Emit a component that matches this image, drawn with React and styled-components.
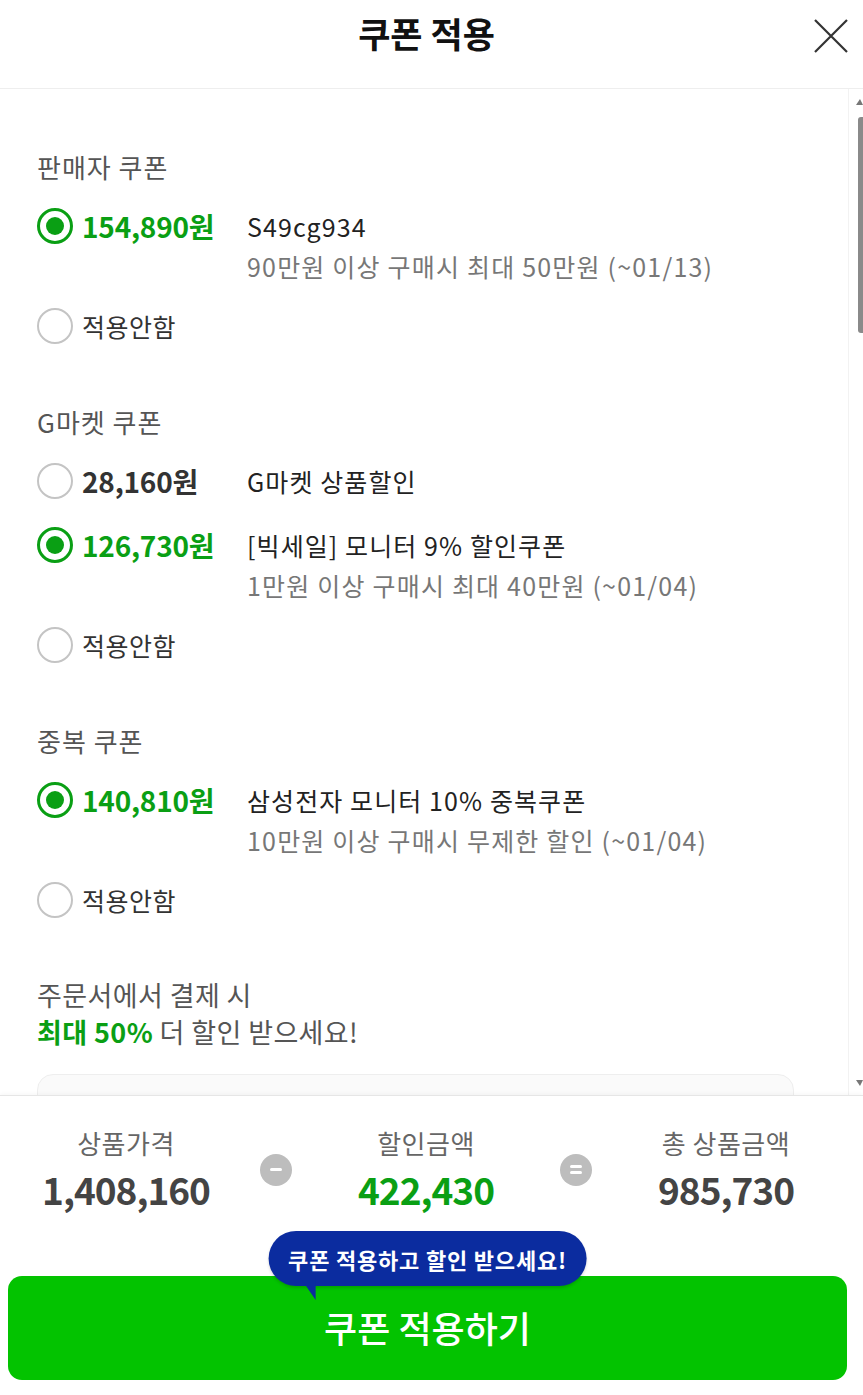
import React from "react";
import styled, { createGlobalStyle } from "styled-components";

const GlobalStyle = createGlobalStyle`
  html, body, #root {
    margin: 0;
    padding: 0;
    height: 100%;
  }
  body {
    font-family: "Noto Sans CJK KR", "Noto Sans", sans-serif;
    background: #fff;
    color: #222;
  }
  * {
    box-sizing: border-box;
  }
`;

const Page = styled.div`
  height: 100vh;
  display: flex;
  flex-direction: column;
  overflow: hidden;
`;

const Header = styled.header`
  flex: 0 0 89px;
  display: grid;
  grid-template-columns: 78px 1fr 88px;
  align-items: center;
  border-bottom: 1px solid #eeeeee;
  padding-bottom: 16px;
`;

const Title = styled.h1`
  grid-column: 2;
  margin: 0 0 6px;
  text-align: center;
  font-size: 35px;
  font-weight: 700;
  color: #111;
  letter-spacing: 0;
  line-height: 40px;
`;

const CloseButton = styled.button`
  justify-self: end;
  margin-right: 13px;
  width: 38px;
  height: 38px;
  padding: 0;
  border: none;
  background: none;
  display: flex;
  align-items: center;
  justify-content: center;
  cursor: pointer;
`;

const Body = styled.div`
  flex: 1;
  min-height: 0;
  display: flex;
`;

const Scroll = styled.div`
  flex: 1;
  overflow: hidden;
  padding: 58px 54px 40px 37px;
`;

const Rail = styled.div`
  flex: 0 0 15px;
  border-left: 1px solid #f2f2f2;
  display: flex;
  flex-direction: column;
  align-items: flex-end;
  padding: 10px 0 9px;
`;

const Arrow = styled.span`
  width: 0;
  height: 0;
  border-left: 4px solid transparent;
  border-right: 3px solid transparent;
  border-bottom: ${(p) => (p.$down ? "none" : "6px solid #777")};
  border-top: ${(p) => (p.$down ? "6px solid #777" : "none")};
  margin-top: ${(p) => (p.$down ? "auto" : "0")};
`;

const Thumb = styled.span`
  margin-top: 12px;
  width: 5px;
  height: 216px;
  border-radius: 3px 0 0 3px;
  background: #8a8a8a;
`;

const Section = styled.section`
  display: flex;
  flex-direction: column;
  gap: 17px;
  margin-bottom: 54px;
`;

const SectionTitle = styled.h2`
  margin: 0;
  font-size: 26px;
  font-weight: 400;
  line-height: 40px;
  color: #555;
  letter-spacing: 1px;
`;

const Options = styled.div`
  display: flex;
  flex-direction: column;
  gap: 20px;
`;

const Option = styled.label`
  display: flex;
  align-items: flex-start;
  cursor: pointer;
`;

const Radio = styled.span`
  flex: 0 0 36px;
  width: 36px;
  height: 36px;
  margin: 4px 9px 0 0;
  border-radius: 50%;
  border: ${(p) => (p.$checked ? "3px solid #0a9f14" : "2px solid #c4c4c4")};
  display: flex;
  align-items: center;
  justify-content: center;

  &::after {
    content: "";
    display: ${(p) => (p.$checked ? "block" : "none")};
    width: 18px;
    height: 18px;
    border-radius: 50%;
    background: #0a9f14;
  }
`;

const Price = styled.span`
  flex: 0 0 165px;
  font-size: 28px;
  font-weight: 700;
  line-height: 44px;
  letter-spacing: -0.2px;
  color: ${(p) => (p.$checked ? "#0a9f14" : "#333")};
`;

const Info = styled.div`
  display: flex;
  flex-direction: column;
`;

const Name = styled.span`
  font-size: 25px;
  line-height: 44px;
  color: #222;
  letter-spacing: 1.1px;
`;

const Desc = styled.span`
  font-size: 25px;
  line-height: 36px;
  color: #777;
  letter-spacing: 1.2px;
`;

const NoneLabel = styled.span`
  font-size: 25px;
  line-height: 44px;
  color: #333;
  letter-spacing: 0.5px;
`;

const Promo = styled.p`
  margin: 0 0 24px;
  font-size: 27px;
  line-height: 37px;
  color: #555;
  letter-spacing: 0.4px;
`;

const Highlight = styled.strong`
  color: #0a9f14;
  font-weight: 700;
`;

const CardBox = styled.div`
  height: 3400px;
  border: 1px solid #eeeeee;
  border-radius: 16px;
  background: #fafafa;
`;

const Footer = styled.footer`
  flex: 0 0 300px;
  border-top: 1px solid #e6e6e6;
  box-shadow: 0 -1px 4px rgba(0, 0, 0, 0.04);
  padding: 30px 0 15px;
  display: flex;
  flex-direction: column;
`;

const Summary = styled.div`
  width: 820px;
  margin-left: 16px;
  display: grid;
  grid-template-columns: 220px 80px 220px 80px 220px;
  align-items: center;
`;

const SummaryItem = styled.div`
  display: flex;
  flex-direction: column;
  align-items: center;
  gap: 5px;
`;

const SummaryLabel = styled.span`
  font-size: 26px;
  line-height: 34px;
  color: #666;
  letter-spacing: 0.5px;
`;

const SummaryValue = styled.span`
  font-size: 37px;
  font-weight: 700;
  line-height: 48px;
  letter-spacing: -1px;
  color: ${(p) => (p.$accent ? "#0a9f14" : "#444")};
`;

const Operator = styled.span`
  justify-self: center;
  width: 32px;
  height: 32px;
  border-radius: 50%;
  background: #bdbdbd;
  display: flex;
  flex-direction: column;
  align-items: center;
  justify-content: center;
  gap: 3px;

  &::before,
  &::after {
    content: "";
    width: 12px;
    height: 3px;
    border-radius: 2px;
    background: #fff;
  }
  &::after {
    display: ${(p) => (p.$equals ? "block" : "none")};
  }
`;

const ButtonWrap = styled.div`
  position: relative;
  margin: auto 16px 0 8px;
`;

const ApplyButton = styled.button`
  width: 100%;
  height: 104px;
  border: none;
  border-radius: 14px;
  background: #03c300;
  color: #fff;
  font-family: inherit;
  font-size: 36px;
  font-weight: 500;
  letter-spacing: 0;
  cursor: pointer;
  padding: 0 0 2px;
`;

const Bubble = styled.div`
  position: absolute;
  top: -45px;
  left: 50%;
  transform: translateX(-50%);
  height: 55px;
  padding: 0 20px;
  border-radius: 28px;
  background: #0b2c9f;
  color: #fff;
  font-size: 22px;
  font-weight: 700;
  letter-spacing: 0.8px;
  white-space: nowrap;
  display: flex;
  align-items: center;
  box-shadow: 0 2px 3px rgba(0, 0, 0, 0.15);

  &::after {
    content: "";
    position: absolute;
    left: 32px;
    bottom: -14px;
    width: 0;
    height: 0;
    border-top: 22px solid #0b2c9f;
    border-left: 15px solid transparent;
  }
`;

const sections = [
  {
    title: "판매자 쿠폰",
    options: [
      {
        price: "154,890원",
        name: "S49cg934",
        desc: "90만원 이상 구매시 최대 50만원 (~01/13)",
        checked: true,
      },
    ],
  },
  {
    title: "G마켓 쿠폰",
    options: [
      { price: "28,160원", name: "G마켓 상품할인" },
      {
        price: "126,730원",
        name: "[빅세일] 모니터 9% 할인쿠폰",
        desc: "1만원 이상 구매시 최대 40만원 (~01/04)",
        checked: true,
      },
    ],
  },
  {
    title: "중복 쿠폰",
    options: [
      {
        price: "140,810원",
        name: "삼성전자 모니터 10% 중복쿠폰",
        desc: "10만원 이상 구매시 무제한 할인 (~01/04)",
        checked: true,
      },
    ],
  },
];

const CloseIcon = () => (
  <svg width="36" height="36" viewBox="0 0 36 36">
    <path d="M2 2L34 34M34 2L2 34" stroke="#333" strokeWidth="2.2" fill="none" />
  </svg>
);

export default function App() {
  return (
    <>
      <GlobalStyle />
      <Page>
        <Header>
          <Title>쿠폰 적용</Title>
          <CloseButton aria-label="닫기">
            <CloseIcon />
          </CloseButton>
        </Header>

        <Body>
          <Scroll>
            {sections.map((section) => (
              <Section key={section.title}>
                <SectionTitle>{section.title}</SectionTitle>
                <Options>
                  {section.options.map((opt) => (
                    <Option key={opt.price}>
                      <Radio $checked={opt.checked} />
                      <Price $checked={opt.checked}>{opt.price}</Price>
                      <Info>
                        <Name>{opt.name}</Name>
                        {opt.desc && <Desc>{opt.desc}</Desc>}
                      </Info>
                    </Option>
                  ))}
                  <Option>
                    <Radio />
                    <NoneLabel>적용안함</NoneLabel>
                  </Option>
                </Options>
              </Section>
            ))}

            <Promo>
              주문서에서 결제 시
              <br />
              <Highlight>최대 50%</Highlight> 더 할인 받으세요!
            </Promo>
            <CardBox />
          </Scroll>
          <Rail>
            <Arrow />
            <Thumb />
            <Arrow $down />
          </Rail>
        </Body>

        <Footer>
          <Summary>
            <SummaryItem>
              <SummaryLabel>상품가격</SummaryLabel>
              <SummaryValue>1,408,160</SummaryValue>
            </SummaryItem>
            <Operator />
            <SummaryItem>
              <SummaryLabel>할인금액</SummaryLabel>
              <SummaryValue $accent>422,430</SummaryValue>
            </SummaryItem>
            <Operator $equals />
            <SummaryItem>
              <SummaryLabel>총 상품금액</SummaryLabel>
              <SummaryValue>985,730</SummaryValue>
            </SummaryItem>
          </Summary>

          <ButtonWrap>
            <Bubble>쿠폰 적용하고 할인 받으세요!</Bubble>
            <ApplyButton>쿠폰 적용하기</ApplyButton>
          </ButtonWrap>
        </Footer>
      </Page>
    </>
  );
}
